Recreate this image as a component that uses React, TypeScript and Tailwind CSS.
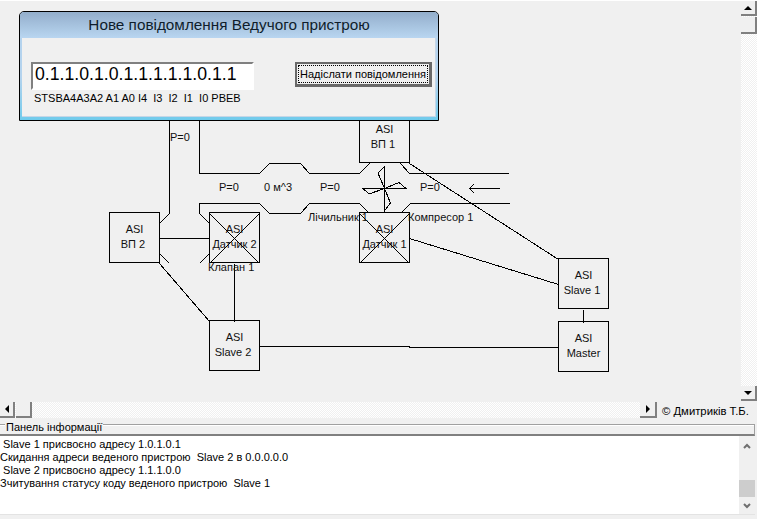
const font = "font-['Liberation_Sans',Arial,sans-serif]";

function Node({ className, top, bottom, shifted }: { className: string; top: string; bottom: string; shifted?: boolean }) {
  return (
    <div className={`absolute flex h-[51px] w-[51px] flex-col items-center justify-center border border-black pb-[2px] text-center text-[11px] leading-[15px] text-[#111] ${className}`}>
      <span>{top}</span>
      <span className={shifted ? "whitespace-nowrap pr-[3px]" : "whitespace-nowrap"}>{bottom}</span>
    </div>
  );
}

function Label({ className, children }: { className: string; children: string }) {
  return <span className={`absolute whitespace-nowrap text-[11px] leading-[14px] text-[#111] ${className}`}>{children}</span>;
}

function Wires() {
  return (
    <svg className="absolute left-0 top-0 h-[403px] w-[741px]" viewBox="0 0 741 403" fill="none" stroke="#000" strokeWidth="1" shapeRendering="crispEdges">
      {/* top of the pipe */}
      <polyline points="199.5,112 199.5,172.5 259.5,172.5 269.5,162.5 300.5,162.5 309.5,172.5 359.5,172.5 369.5,162.5" />
      <polyline points="400.5,162.5 409.5,172.5 509,172.5" />
      {/* bottom of the pipe */}
      <polyline points="209.5,222.5 199.5,212.5 199.5,202.5 259.5,202.5 269.5,212.5 300.5,212.5 309.5,202.5 359.5,202.5 369.5,212.5" />
      <polyline points="400.5,212.5 410.5,202.5 510,202.5" />
      <line x1="199.5" y1="262.5" x2="209.5" y2="252.5" />
      {/* wiring */}
      <polyline points="169.5,112 169.5,212.5 159.5,222.5" />
      <line x1="159.5" y1="252.5" x2="169.5" y2="262.5" />
      <line x1="159.5" y1="237.5" x2="209.5" y2="237.5" />
      <line x1="159.5" y1="262.5" x2="209.5" y2="320.5" />
      <line x1="234.5" y1="262.5" x2="234.5" y2="320.5" />
      <polyline points="259.5,345.5 409.5,345.5 409.5,346.5 558.5,346.5" />
      <line x1="583.5" y1="308.5" x2="583.5" y2="321.5" />
      <line x1="409.5" y1="237.5" x2="558.5" y2="283.5" />
      <line x1="409.5" y1="162.5" x2="558.5" y2="258.5" />
      {/* crossed out sensors */}
      <line x1="209.5" y1="212.5" x2="259.5" y2="262.5" />
      <line x1="259.5" y1="212.5" x2="209.5" y2="262.5" />
      <line x1="359.5" y1="212.5" x2="409.5" y2="262.5" />
      <line x1="409.5" y1="212.5" x2="359.5" y2="262.5" />
      {/* fan */}
      <polygon points="384.5,187.5 378,172 384.5,165.5" />
      <polygon points="384.5,187.5 399,181.5 406,187.5" />
      <polygon points="384.5,187.5 390.5,202 384.5,210" />
      <polygon points="384.5,187.5 363,187.5 369,193" />
      {/* flow arrow */}
      <polyline points="474,183 469.5,187.5 474,192" />
      <line x1="469.5" y1="187.5" x2="500" y2="187.5" />
    </svg>
  );
}

function SendDialog() {
  return (
    <div className="absolute left-[19px] top-[10px] z-10 flex h-[110px] w-[420px] flex-col rounded-t-[5px] border border-black bg-gradient-to-b from-[#b4d3ee] from-60% to-[#6fcbec] px-[2px] pb-[3px]">
      <div className="-mx-[2px] flex h-[26px] shrink-0 items-center justify-center rounded-t-[4px] bg-gradient-to-b from-[#93aecb] to-[#b9d6f1] pt-px text-[15.3px] text-[#0f1d2b]">
        Нове повідомлення Ведучого пристрою
      </div>
      <div className="flex grow flex-col border-b border-r border-[#c6d6e6] bg-[#f0f0f0] pl-[9px] pr-[3px] pt-[24px]">
        <div className="flex items-start justify-between">
          <div className="flex h-[28px] w-[223px] items-center border-2 border-b-white border-l-[#808080] border-r-white border-t-[#808080] bg-white pb-[3px] pl-[2px] text-[17.7px] text-black">
            0.1.1.0.1.0.1.1.1.1.1.0.1.1
          </div>
          <button className="h-[25px] w-[137px] border-2 border-b-[3px] border-r-[3px] border-[#696969] bg-[#f0f0f0] p-[1px] text-[11px] text-black">
            <span className="flex h-full items-center justify-center whitespace-nowrap border border-dotted border-black">Надіслати повідомлення</span>
          </button>
        </div>
        <div className="mt-[1px] whitespace-pre pl-[3px] text-[11px] leading-[14px] text-black">STSBA4A3A2 A1 A0 I4  I3  I2  I1  I0 PBEB</div>
      </div>
    </div>
  );
}

function ScrollButton({ className, children }: { className: string; children?: React.ReactNode }) {
  return (
    <div className={`flex shrink-0 items-center justify-center border-b-2 border-r-2 border-b-[#808080] border-r-[#808080] bg-[#f0f0f0] ${className}`}>
      {children}
    </div>
  );
}

export default function App() {
  return (
    <div className={`flex h-[519px] w-[757px] flex-col overflow-hidden bg-[#f0f0f0] ${font}`}>
      <div className="flex h-[402px] shrink-0 border-t border-white">
        <div className="relative w-[741px] shrink-0">
          <Wires />
          <Node className="left-[359px] top-[111px]" top="ASI" bottom="ВП 1" shifted />
          <Node className="left-[109px] top-[211px]" top="ASI" bottom="ВП 2" shifted />
          <Node className="left-[209px] top-[211px]" top="ASI" bottom="Датчик 2" />
          <Node className="left-[359px] top-[211px]" top="ASI" bottom="Датчик 1" />
          <Node className="left-[558px] top-[257px]" top="ASI" bottom="Slave 1" shifted />
          <Node className="left-[209px] top-[319px]" top="ASI" bottom="Slave 2" shifted />
          <Node className="left-[558px] top-[320px]" top="ASI" bottom="Master" />
          <Label className="left-[170px] top-[129px]">P=0</Label>
          <Label className="left-[219px] top-[179px]">P=0</Label>
          <Label className="left-[264px] top-[179px]">0 м^3</Label>
          <Label className="left-[320px] top-[179px]">P=0</Label>
          <Label className="left-[420px] top-[179px]">P=0</Label>
          <Label className="left-[308px] top-[209px]">Лічильник 1</Label>
          <Label className="left-[408px] top-[209px]">Компресор 1</Label>
          <Label className="left-[208px] top-[259px]">Клапан 1</Label>
          <SendDialog />
        </div>
        <div className="flex h-[400px] w-[16px] flex-col bg-[repeating-conic-gradient(#f0f0f0_0_25%,#fff_0_50%)] bg-[length:2px_2px]">
          <ScrollButton className="h-[15px]">
            <div className="h-0 w-0 border-x-[4px] border-b-[4px] border-x-transparent border-b-black" />
          </ScrollButton>
          <ScrollButton className="mt-px h-[17px]" />
          <div className="grow" />
          <ScrollButton className="h-[15px]">
            <div className="h-0 w-0 border-x-[4px] border-t-[4px] border-x-transparent border-t-black" />
          </ScrollButton>
        </div>
      </div>

      <div className="flex h-[16px] shrink-0 items-center">
        <div className="flex h-full w-[657px] shrink-0 bg-[repeating-conic-gradient(#f0f0f0_0_25%,#fff_0_50%)] bg-[length:2px_2px]">
          <ScrollButton className="w-[15px]">
            <div className="h-0 w-0 border-y-[4px] border-r-[4px] border-y-transparent border-r-black" />
          </ScrollButton>
          <ScrollButton className="ml-px w-[16px]" />
          <div className="grow" />
          <ScrollButton className="w-[17px]">
            <div className="h-0 w-0 border-y-[4px] border-l-[4px] border-y-transparent border-l-black" />
          </ScrollButton>
        </div>
        <span className="ml-[5px] mt-[3px] whitespace-nowrap text-[11.3px] text-black">© Дмитриків Т.Б.</span>
      </div>

      <div className="relative mt-[6px] h-[12px] w-[755px] shrink-0 border-b-2 border-r border-t border-b-[#808080] border-r-[#a0a0a0] border-t-[#a0a0a0] shadow-[inset_0_1px_0_#fff]">
        <span className="absolute -top-[5px] left-[5px] bg-[#f0f0f0] px-[1px] text-[11px] leading-[14px] text-black">Панель інформації</span>
      </div>

      <div className="flex h-[79px] w-[755px] shrink-0 border-b border-[#e3e3e3] bg-white">
        <div className="w-[739px] whitespace-pre pt-[2px] text-[11px] leading-[13px] text-black">
          <div> Slave 1 присвоєно адресу 1.0.1.0.1</div>
          <div>Скидання адреси веденого пристрою  Slave 2 в 0.0.0.0.0</div>
          <div> Slave 2 присвоєно адресу 1.1.1.0.0</div>
          <div>Зчитування статусу коду веденого пристрою  Slave 1</div>
        </div>
        <div className="flex w-[16px] flex-col items-center bg-[#f0f0f0]">
          <svg className="mt-[7px]" width="8" height="6" viewBox="0 0 8 6" fill="none" stroke="#707070" strokeWidth="2"><path d="M1 5l3-3 3 3" /></svg>
          <div className="mt-[31px] h-[17px] w-full bg-[#cdcdcd]" />
          <svg className="mt-[6px]" width="8" height="6" viewBox="0 0 8 6" fill="none" stroke="#707070" strokeWidth="2"><path d="M1 1l3 3 3-3" /></svg>
        </div>
      </div>
    </div>
  );
}
